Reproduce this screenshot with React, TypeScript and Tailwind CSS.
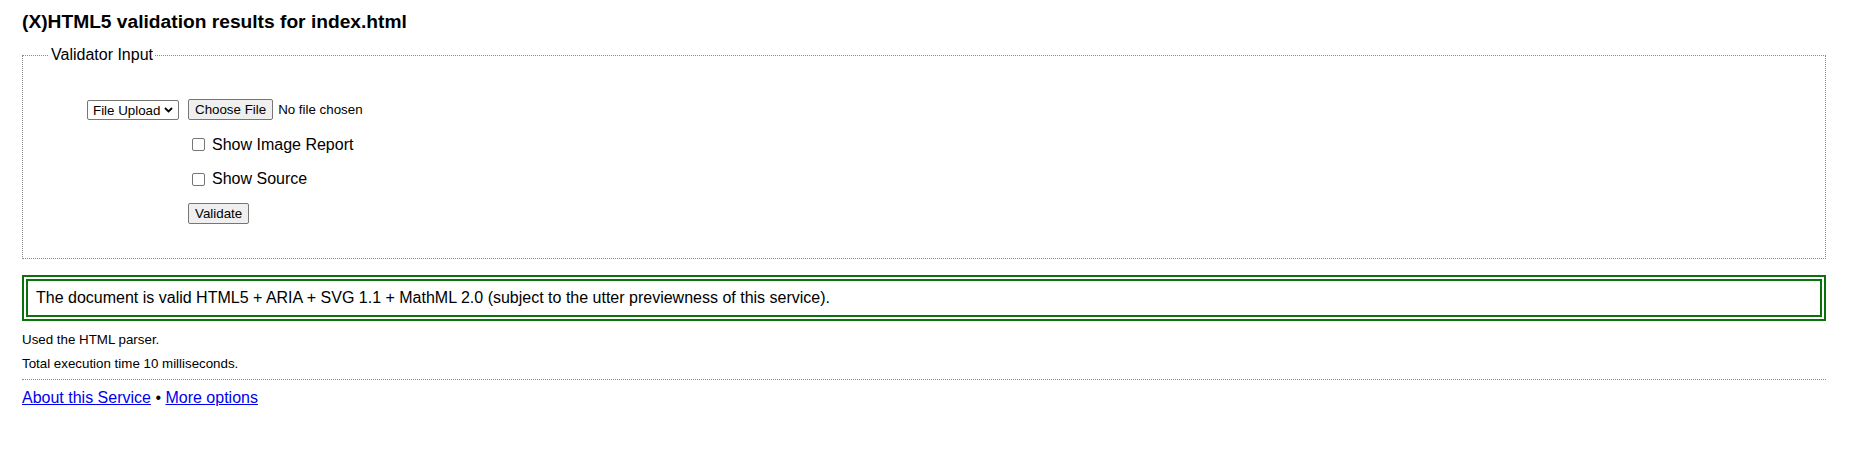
import React from "react";

function Chevron() {
  return (
    <svg width="9" height="6" viewBox="0 0 9 6" className="ml-[4px] shrink-0">
      <path d="M1 1 L4.5 4.5 L8 1" fill="none" stroke="#000" strokeWidth="1.8" />
    </svg>
  );
}

function FakeButton({ children }: { children: React.ReactNode }) {
  return (
    <span className="inline-flex h-[21px] items-center rounded-[2px] border border-[#767676] bg-[#efefef] px-[6px] text-[13.33px] leading-[15px] text-black">
      {children}
    </span>
  );
}

function FakeCheckbox() {
  return (
    <span className="ml-[4px] mr-[7px] inline-block h-[13px] w-[13px] shrink-0 rounded-[2px] border border-[#767676] bg-white" />
  );
}

export default function App() {
  return (
    <div className="min-h-[458px] bg-white pl-[22px] pr-[24px] pt-[11px] font-['Liberation_Sans',Arial,sans-serif] text-black">
      <h2 className="text-[19.2px] font-bold leading-[22px]">(X)HTML5 validation results for index.html</h2>

      <fieldset className="mt-[13px] border border-dotted border-[#8a8a8a] pb-[27px] pt-[28px]">
        <legend className="ml-[26px] px-[2px] text-[16px] leading-[18px]">Validator Input</legend>

        <div className="flex flex-col pl-[64px]">
          <div className="flex h-[35px] items-center">
            <div className="w-[101px] shrink-0">
              <span className="inline-flex h-[20px] w-[92px] items-center rounded-[2px] border border-[#767676] bg-white pl-[5px] text-[13.33px] leading-[15px]">
                File Upload
                <Chevron />
              </span>
            </div>
            <div className="flex items-center">
              <FakeButton>Choose File</FakeButton>
              <span className="ml-[5px] text-[13.33px] leading-[15px]">No file chosen</span>
            </div>
          </div>

          <div className="flex h-[35px] items-center">
            <div className="w-[101px] shrink-0" />
            <label className="flex items-center text-[16px] leading-[18px]">
              <FakeCheckbox />
              Show Image Report
            </label>
          </div>

          <div className="flex h-[34px] items-center">
            <div className="w-[101px] shrink-0" />
            <label className="flex items-center text-[16px] leading-[18px]">
              <FakeCheckbox />
              Show Source
            </label>
          </div>

          <div className="flex h-[35px] items-center">
            <div className="w-[101px] shrink-0" />
            <FakeButton>Validate</FakeButton>
          </div>
        </div>
      </fieldset>

      <div className="mt-[16px] border-[6px] border-double border-[#0b720b] px-[8px] py-[8px] text-[16px] leading-[18px]">
        The document is valid HTML5 + ARIA + SVG 1.1 + MathML 2.0 (subject to the utter previewness of this service).
      </div>

      <p className="mt-[11px] text-[13.33px] leading-[16px]">Used the HTML parser.</p>
      <p className="mt-[8px] text-[13.33px] leading-[16px]">Total execution time 10 milliseconds.</p>

      <hr className="mt-[7px] border-0 border-t border-dotted border-[#8a8a8a]" />

      <p className="mt-[9px] text-[16px] leading-[18px]">
        <a href="#" className="text-[#0000ee] underline">About this Service</a>
        {" \u2022 "}
        <a href="#" className="text-[#0000ee] underline">More options</a>
      </p>
    </div>
  );
}
